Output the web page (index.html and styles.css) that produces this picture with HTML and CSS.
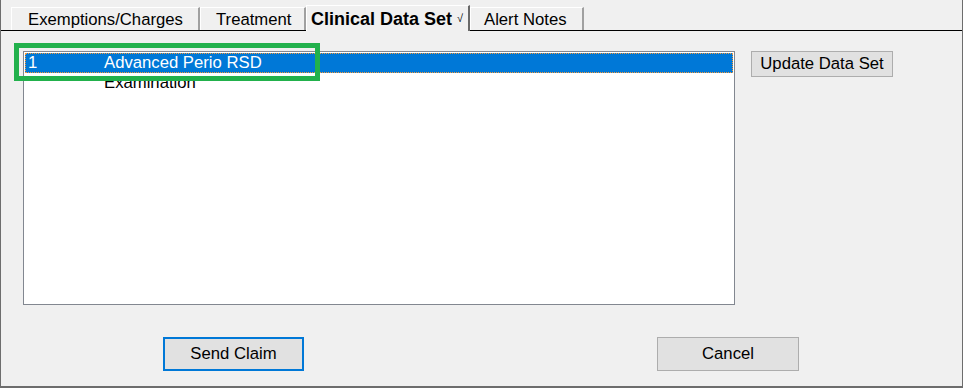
FILE: index.html
```
<!DOCTYPE html>
<html lang="en">
<head>
    <meta charset="UTF-8">
    <title>Clinical Data Set</title>
    <link rel="stylesheet" href="styles.css">
</head>
<body>
    <div class="window">
        <div class="tabs">
            <div class="tab tab-exempt">Exemptions/Charges</div>
            <div class="tab tab-treat">Treatment</div>
            <div class="tab active">Clinical Data Set <span class="tick">√</span></div>
            <div class="tab tab-alert">Alert Notes</div>
        </div>

        <div class="content">
            <div class="listbox">
                <div class="row selected">
                    <span class="col-num">1</span>
                    <span class="col-name">Advanced Perio RSD</span>
                </div>
                <div class="row">
                    <span class="col-num"></span>
                    <span class="col-name">Examination</span>
                </div>
            </div>
            <button class="btn btn-update">Update Data Set</button>
        </div>

        <div class="footer">
            <button class="btn btn-default">Send Claim</button>
            <button class="btn">Cancel</button>
        </div>

        <div class="highlight"></div>
    </div>
</body>
</html>
```
FILE: styles.css
```
* {
    margin: 0;
    padding: 0;
    box-sizing: border-box;
}

body {
    background-color: #f0f0f0;
    font-family: "Liberation Sans", Arial, sans-serif;
    font-size: 16.7px;
    color: #000;
}

.window {
    position: relative;
    width: 963px;
    height: 388px;
    background-color: #f0f0f0;
    border-left: 1px solid #6d6d6d;
    border-right: 1px solid #6d6d6d;
    border-bottom: 2px solid #6d6d6d;
}

/* tab strip */
.tabs {
    display: flex;
    align-items: flex-end;
    height: 31px;
    padding-left: 10px;
    border-bottom: 1px solid #000;
}

.tab {
    height: 23px;
    line-height: 23px;
    background-color: #f0f0f0;
    border-top: 1px solid #fff;
    border-left: 1px solid #fff;
    border-right: 2px solid #a0a0a0;
    white-space: nowrap;
}

.tab-exempt {
    width: 189px;
    padding-left: 16px;
}

.tab-treat {
    width: 106px;
    padding-left: 15px;
}

.tab.active {
    height: 26px;
    width: 164px;
    margin-bottom: -1px;
    padding-left: 4px;
    font-size: 18px;
    font-weight: bold;
    line-height: 24px;
    overflow: hidden;
    border-right: 2px solid #696969;
}

.tick {
    font-size: 11px;
    font-weight: normal;
    vertical-align: 3px;
}

.tab-alert {
    width: 114px;
    padding-left: 13px;
}

/* list + side button */
.content {
    display: flex;
    align-items: flex-start;
    gap: 16px;
    padding: 20px 0 0 22px;
}

.listbox {
    width: 712px;
    height: 254px;
    background-color: #fff;
    border: 1px solid #828790;
    padding: 1px;
}

.row {
    display: flex;
    height: 20px;
    line-height: 19px;
    padding-left: 3px;
}

.row.selected {
    background-color: #0078d7;
    color: #fff;
    border: 1px dotted #f59a3a;
    padding-left: 2px;
    line-height: 17px;
}

.col-num {
    width: 76px;
}

.btn {
    font-family: "Liberation Sans", Arial, sans-serif;
    font-size: 16.7px;
    color: #000;
    background-color: #e1e1e1;
    border: 1px solid #adadad;
}

.btn-update {
    width: 142px;
    height: 26px;
}

/* bottom buttons */
.footer {
    display: flex;
    gap: 353px;
    padding: 32px 0 0 162px;
}

.footer .btn {
    width: 142px;
    height: 34px;
}

.footer .btn-default {
    width: 141px;
    border: 2px solid #0078d7;
}

/* annotation box drawn over the first row */
.highlight {
    position: absolute;
    left: 13px;
    top: 43px;
    width: 306px;
    height: 38px;
    border: 5px solid #22b14c;
}
```
